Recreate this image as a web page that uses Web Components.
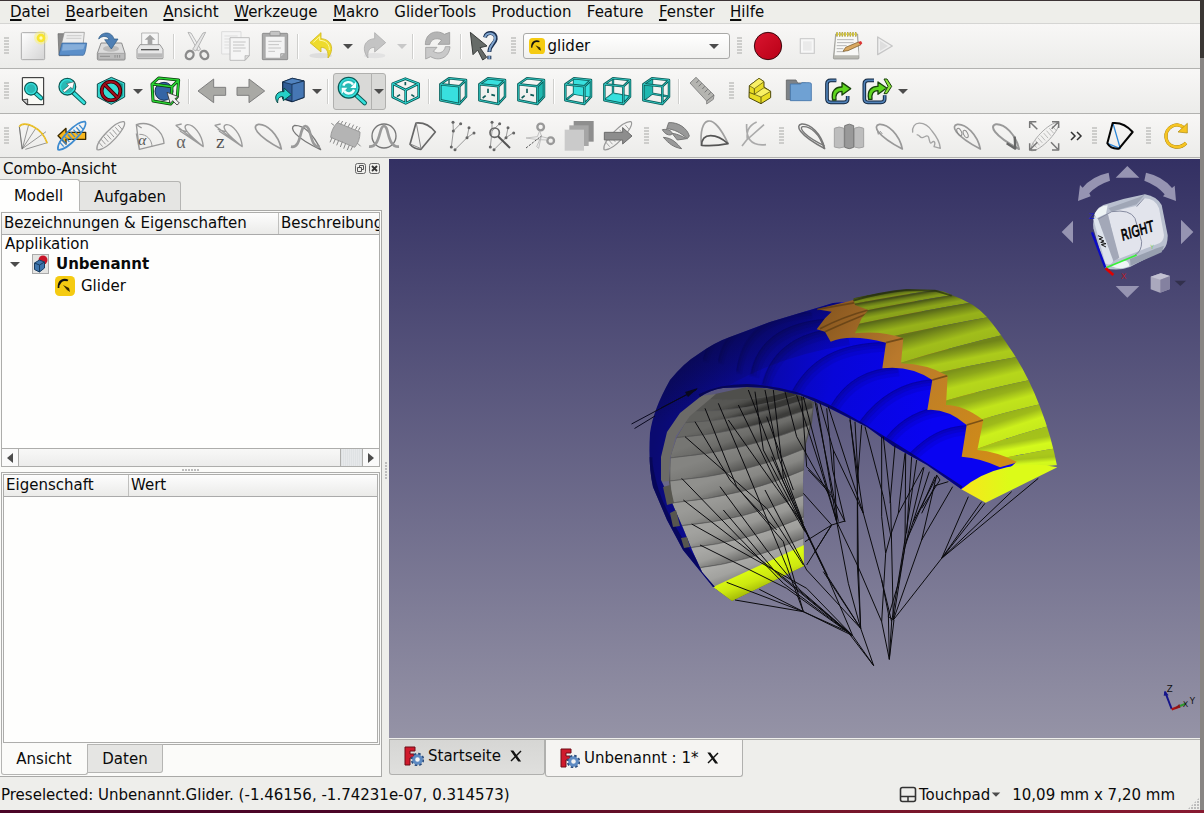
<!DOCTYPE html>
<html lang="de">
<head>
<meta charset="utf-8">
<title>FreeCAD</title>
<style>
html,body{margin:0;height:100%;overflow:hidden;background:#eeeeeb}
body{font:15px/20px "DejaVu Sans",sans-serif;color:#0a0a0a}
</style>
</head>
<body>
<app-window></app-window>
<script>
const define=(name,html,setup)=>{
  const t=document.createElement('template');t.innerHTML=html;
  customElements.define(name,class extends HTMLElement{
    constructor(){super();this.attachShadow({mode:'open'}).append(t.content.cloneNode(true));}
    connectedCallback(){if(setup&&!this.ready){this.ready=true;setup(this,this.shadowRoot);}}
  });
};

/* ---------- icons: [viewBox x, viewBox y, markup], each 90 units wide ---------- */
const R1=93,R2=228,R3=363;
const S=(d,c='#9a9a9a',w=4,x='')=>`<path d="${d}" fill="none" stroke="${c}" stroke-width="${w}" stroke-linejoin="round" ${x}/>`;
const F=(d,f,c='none',w=3)=>`<path d="${d}" fill="${f}" stroke="${c}" stroke-width="${w}" stroke-linejoin="round"/>`;
const TEAL='#34e0dc',DK='#0c5b57';
const P={A:'7 25',B:'64 31',C:'64 84',D:'7 73',E:'33 7',G:'84 62',F:'84 12',H:'33 53'};
const face=s=>'M'+[...s].map(k=>P[k]).join('L')+'Z';
const cube=f=>{
  const back='M33 7L33 53L84 62M33 53L7 73';
  const all='M7 25L64 31L64 84L7 73ZM7 25L33 7L84 12L64 31M84 12L84 62L64 84';
  const dashes='M33 38v13M26 59l-9 7M43 56l11 3';
  return [0,0,(f==='EFGH'||f==='DCGH'||f==='ADHE'?S(back,DK,7)+S(back,TEAL,2):'')+
   F(face(f),f==='ADHE'||f==='BCGF'?'#20b8b0':'#38e0de')+
   (f==='ABFE'||f==='BCGF'?S(dashes,DK,5):'')+(f==='ABCD'?S('M33 7V24',DK,4):'')+S(all,DK,7.5)+S(all,'#2fc9c4',2.8)];
};
const leaf=(x,y,c='#9a9a9a',w=4)=>S(`M${x+84} ${y+84}C${x+75} ${y+40} ${x+40} ${y+8} ${x+15} ${y+10}C${x-5} ${y+14} ${x+5} ${y+42} ${x+84} ${y+84}Z`,c,w);
const glass=(x,y,r,e)=>`<path d="M${x+r*.7} ${y+r*.7}L${x+e} ${y+e-2}" stroke="${DK}" stroke-width="14" stroke-linecap="round"/><path d="M${x+r*.8} ${y+r*.8}L${x+e} ${y+e-2}" stroke="${TEAL}" stroke-width="8" stroke-linecap="round"/><circle cx="${x}" cy="${y}" r="${r}" fill="#28b9b5" stroke="${DK}" stroke-width="4"/><circle cx="${x}" cy="${y}" r="${r-4}" fill="none" stroke="${TEAL}" stroke-width="4"/>`;
const rung=(x,y,c,w)=>{let s=S(`M${x+3} ${y+86}C${x-3} ${y+62} ${x+60} ${y-2} ${x+84} ${y+2}C${x+98} ${y+16} ${x+30} ${y+92} ${x+3} ${y+86}Z`,c,w);
  for(let i=0;i<8;i++)s+=S(`M${x+7+i*8.5} ${y+62-i*7.2}l13 ${15}`,c,w*.75);return s;};
const arrowOut='M98 300C92 272 108 260 126 261V248L152 266L126 285V274C110 274 106 286 108 300Z';
const I={
new:[54,R1,`<rect x="64" y="98" width="70" height="81" rx="3" fill="url(#lg)" stroke="#aaa" stroke-width="3"/><circle cx="123" cy="113" r="21" fill="#fff36b" opacity=".45"/><circle cx="123" cy="114" r="13" fill="#f8e52c"/><circle cx="123" cy="114" r="5" fill="#fffbc0"/>`],
open:[171,R1,F('M174 101h28l6 8v58h-31Z','#8b8b8b','#666',2)+F('M193 97h60l-4 40h-66Z','#ededed','#888',2)+S('M200 107h45M199 115h45','#bbb',2)+F('M186 129h74q-4 34-10 37h-71q-3 0-1-5Z','#5b8fc9','#305f96',2)+F('M189 133h66l-5 15q-30 3-64 4Z','#86aeda')],
save:[288,R1,F('M303 129h62l10 31v17q0 3-3 3h-76q-4 0-4-3v-17Z','#dcdcdc','#7b7b7b',2.5)+F('M294 160h80v15q0 3-3 3h-74q-3 0-3-3Z','#bcbcbc','#888',1.5)+S('M300 169h30M345 165v8M352 165v8M359 165v8','#777',2)+`<ellipse cx="333" cy="146" rx="24" ry="9" fill="#bbb"/>`+F('M296 117C300 96 334 90 342 117H354L334 147L314 119H327C323 108 309 105 296 117Z','#4e7fb4','#295782',2)],
print:[405,R1,F('M425 99h50v42h-50Z','#f6f6f6','#aaa',2.5)+F('M443 133v-14h-9l16-15l16 15h-9v14Z','#a4a4a4')+F('M420 134h60l9 14v26q0 2-3 2h-72q-3 0-3-2v-26Z','#e7e7e7','#8c8c8c',2.5)+S('M423 149h54','#555',4)+F('M413 160h74v13h-74Z','#b9b9b9')],
cut:[546,R1,F('M564 97L573 99L602 148L594 153Z','#f0f0f0','#aaa',2.5)+F('M617 97L609 99L578 148L588 153Z','#e6e6e6','#aaa',2.5)+`<ellipse cx="569" cy="165" rx="11" ry="13" fill="none" stroke="#8b8b8b" stroke-width="7" transform="rotate(35 569 165)"/><ellipse cx="613" cy="165" rx="11" ry="13" fill="none" stroke="#8b8b8b" stroke-width="7" transform="rotate(-35 613 165)"/>`],
copy:[663,R1,F('M665 95h58v67h-58Z','#f4f4f4','#dcdcdc')+S('M673 108h40M673 117h40M673 126h14M673 135h14M673 144h14','#ddd',3)+F('M690 113h58v54l-13 14h-45Z','#f5f5f5','#bdbdbd')+F('M748 167h-13v14Z','#ddd','#aaa',2)+S('M699 126h38M699 135h34M699 144h38M699 153h24','#c4c4c4',3)],
paste:[780,R1,F('M789 100h72q2 0 2 3v74q0 2-2 2h-72q-2 0-2-2v-74q0-3 2-3Z','#aaa','#8f8f8f')+F('M797 110h57v51l-12 12h-45Z','#f3f3f3')+F('M854 161h-12v12Z','#ccc','#888',2)+F('M810 98q0-4 4-4h22q4 0 4 4v9h-30Z','#c4c4c4','#888',2)+S('M805 124h40M805 134h32M805 144h38M805 154h20','#c4c4c4',3)],
undo:[918,R1,`<ellipse cx="962" cy="167" rx="34" ry="8" fill="#ddd"/>`+F('M930 128L963 98V116C996 118 1004 148 984 174C986 152 978 142 963 142V156Z','#eedb2d','#d1b71b',2.5)+S('M940 127l19-17v11c20 0 30 14 29 29','#fff9a0',3)],
redo:[1086,R1,`<ellipse cx="1130" cy="167" rx="32" ry="8" fill="#e2e2e2"/>`+F('M1163 128L1130 98V116C1098 118 1090 148 1110 174C1107 152 1115 142 1130 142V156Z','#c4c4c4','#adadad',2.5)],
refresh:[69,R1,F('M79 134C79 96 115 88 136 103L152 97V133H117L128 120C112 112 96 117 92 134Z','#b4b4b4','#9a9a9a',2.5)+F('M153 140C150 176 117 184 95 170L80 177V142H114L103 154C118 164 136 158 139 140Z','#c9c9c9','#a0a0a0',2.5)],
whats:[210,R1,F('M214 97L264 138L243 143L263 172L251 180L236 150L222 164Z','#666b68','#3a3d3b')+`<path d="M258 112C262 92 293 96 290 117C288 132 272 133 271 156M271 167v11" fill="none" stroke="#1c3050" stroke-width="12"/><path d="M258 112C262 94 291 98 288 117C286 130 272 133 271 155M271 168v9" fill="none" stroke="#7fa5cf" stroke-width="6"/>`],
record:[1059,R1,`<circle cx="1104" cy="138" r="41" fill="url(#rg)" stroke="#3a0a10" stroke-width="3"/>`],
stop:[-24,R1,F('M1 116h42v44h-42Z','#f7f7f7','#cfcfcf',4)+F('M9 124h26v28h-26Z','#eaeaea')],
macro:[90,R1,F('M104 102h66l4 72q0 3-3 3h-71q-3 0-3-3Z','#b9b9b2','#8d8d88',2)+F('M106 104h61l6 62h-72Z','#f8f8f6')+S('M108 119h50M108 128h50M107 137h30M107 146h20M107 155h24','#b6b6b6',3)+S('M106 103h62','#8a7a20',13,'stroke-dasharray="4 4"')+S('M106 103h62','#d7c93c',9,'stroke-dasharray="5 3"')+F('M126 154L134 142L172 126L180 134L141 152Z','#d9a860','#6e5021',2)+F('M172 126l8-3l4 7l-5 5Z','#d33')],
play:[210,R1,F('M233 111L277 138L233 164Z','#efefef','#c6c6c6',4)+F('M240 122L264 138L240 153Z','#dedede')],

fit:[54,R2,F('M67 233h64v81h-50l-14-14Z','#fafaf6','#222',3)+F('M67 300l16-3v17Z','#ccc','#222',2.5)+glass(93,266,19,30)],
fitsel:[171,R2,glass(202,260,25,50)+F('M188 272l18-15l-6-6l23-6l-5 22l-6-5l-18 15Z','#fff','#333',1.5)],
style:[288,R2,F('M334 232L374 249V291L334 313L292 291V252Z','#35d6cf','#14494a',3)+F('M341 240L368 252V288L341 305Z','#159089')+`<circle cx="333" cy="273" r="28" fill="#38dcd4" stroke="#3a0006" stroke-width="11"/><circle cx="333" cy="273" r="28" fill="none" stroke="#a90d1d" stroke-width="6"/>`+S('M314 254L352 292','#3a0006',11)+S('M314 254L352 292','#a90d1d',6)],
bbox:[450,R2,`<circle cx="492" cy="274" r="27" fill="#3565a5" stroke="#132d55" stroke-width="3"/>`+S('M456 252L476 234L536 240L516 260ZM456 252L459 303L512 312L516 260M536 240L532 290L512 312','#08380a',9)+S('M456 252L476 234L536 240L516 260ZM456 252L459 303L512 312L516 260M536 240L532 290L512 312','#29d332',5)+F('M501 277L535 290L525 296L538 309L531 315L518 302L511 311Z','#eee','#333',2.5)],
left:[591,R2,F('M594 273L641 237V262H677V286H641V308Z','#a9a9a5','#7f7f7f')],
right:[708,R2,F('M794 273L747 237V262H711V286H747V308Z','#a9a9a5','#7f7f7f')],
goto:[825,R2,F('M848 246L877 235L912 243V292L876 305L848 296Z','#2f5c96','#0f2541',3.5)+F('M848 246L877 235L912 243L876 253Z','#5183bf','#0f2541',2)+F('M876 253L912 243V292L876 305Z','#4677b4','#0f2541',2)+F('M833 309C818 288 834 272 852 275V264L874 284L850 302V291C840 287 832 295 833 309Z','#25cfc8','#0a4845',3)],
sync:[1008,R2,glass(1046,263,31,48)+S('M1030 257C1034 245 1052 242 1059 254M1062 269C1058 283 1040 284 1033 273','#f4ffff',7)+F('M1068 245v19h-17ZM1025 282v-19h17Z','#f4ffff')],
iso:[-27,R2,S('M16 236L56 251V291L17 310L-22 291V251ZM17 270L56 251M17 270V310M17 270L-22 251',DK,8)+S('M16 236L56 251V291L17 310L-22 291V251ZM17 270L56 251M17 270V310M17 270L-22 251',TEAL,3)+S('M16 246v10M0 284l-9 6M34 284l9 6',DK,5)],
cF:cube('ABCD'),cT:cube('ABFE'),cR:cube('BCGF'),cB:cube('EFGH'),cD:cube('DCGH'),cL:cube('ADHE'),
ruler:[862,R2,F('M886 232L868 249L918 303V312L938 298L940 285Z','#b4b4b0','#8a8a8a')+S('M918 303L940 285M894 241l-7 8M903 250l-9 9M912 259l-7 8M921 268l-9 9M930 277l-7 8','#777',3)],
part:[1035,R2,F('M1048 257L1077 235L1092 245V261L1112 274V293L1083 311L1047 293Z','#e9dc25','#4c470a',3)+F('M1048 257L1077 235L1092 245L1063 266Z','#f8f065','#4c470a',2)+F('M1063 283L1092 263L1112 274L1083 291Z','#f8f065','#4c470a',2)+S('M1063 266V283L1047 277M1083 291V311','#4c470a',2.5)],
group:[-48,R2,F('M-41 240h29l5 9h24v50h-58Z','#7d8287','#666',2.5)+F('M-29 252h30l5-4h22q6 0 6 4v50h-63Z','#6fa1d3','#4274aa',2.5)],
link:[69,R2,S('M109 241H92Q81 241 81 252V297Q81 307 92 307H132Q143 307 143 297V288','#12263e',11)+S('M109 241H92Q81 241 81 252V297Q81 307 92 307H132Q143 307 143 297V288','#5182b8',5)+F(arrowOut,'#5ed61e','#17420a',4)],
linkg:[186,R2,S('M222 241H204Q193 241 193 252V297Q193 307 204 307H243Q254 307 254 297V286','#12263e',11)+S('M222 241H204Q193 241 193 252V297Q193 307 204 307H243Q254 307 254 297V286','#5182b8',5)+`<g transform="translate(108 -2)">${F(arrowOut,'#5ed61e','#17420a',4)}</g>`+F('M252 237L261 237L275 259L261 281L252 281L264 259Z','#8ce33a','#17420a',3)],

g1:[54,R3,S('M58 380L67 446L86 374M67 446L138 395M67 446L108 384M76 448L142 428M58 380L66 448','#666',2)+S('M58 380C70 360 125 380 142 430','#e5b81c',5)+S('M58 380C70 360 125 380 142 430','#f7d95a',2,'stroke-dasharray="4 5"')],
g2:[171,R3,F('M174 407L198 385V397H257V418H198V432Z','#f7b61d','#3b2a00',4)+rung(171,R3,'#3d8bd0',5)],
g3:[288,R3,rung(288,R3,'#9b9b9b',4)],
g4:[405,R3,S('M409 374C450 360 490 392 492 430L418 448ZM409 374L425 384M418 448L409 400','#999',4)+S('M418 403C440 402 456 420 456 440','#999',3)+`<text x="415" y="436" font-family="Liberation Serif" font-style="italic" font-size="46" fill="#555">α</text>`],
g5:[522,R3,S('M610 440C606 400 580 373 562 374C540 380 575 412 610 440L540 393M527 376L610 440M527 376L545 372M536 388L560 395','#9b9b9b',4)+`<text x="529" y="444" font-family="Liberation Serif" font-size="54" fill="#666">α</text>`],
g6:[639,R3,S('M727 440C723 400 697 373 679 374C657 380 692 412 727 440L657 393M644 376L727 440M644 376L662 372M653 388L677 395','#9b9b9b',4)+`<text x="648" y="444" font-family="DejaVu Serif" font-size="48" fill="#555">z</text>`],
g7:[756,R3,leaf(760,R3,'#999',5)],
g8:[873,R3,S('M962 449C948 420 920 376 884 376C866 384 884 412 962 449Z','#777',4)+S('M873 440C905 446 898 380 916 378C936 380 928 444 960 440','#999',8)],
g9:[990,R3,F('M1012 368L1080 396Q1080 424 1064 442L992 412Q994 386 1012 368Z','#b4b4b4','#999')+S('M1012 370l6-8M1022 373l6-10M1033 377l6-11M1044 381l6-11M1055 385l6-11M1066 389l6-11M1075 392l5-10M996 413l-6 14M1006 417l-6 14M1016 421l-6 15M1027 425l-6 16M1037 430l-6 16M1048 435l-6 15M1058 439l-6 12M1002 376l-8-6M1073 430l9 9','#888',3)],
g10:[1107,R3,`<circle cx="1152" cy="408" r="36" fill="none" stroke="#777" stroke-width="4"/>`+S('M1107 440C1143 442 1136 378 1152 378C1168 378 1160 442 1197 440','#9b9b9b',8)],
g11:[24,R3,S('M48 369Q82 366 106 396L63 448Q42 448 30 433Z','#666',5)+S('M49 370L63 446L31 432','#888',3)],
g12:[141,R3,S('M159 367L160 393L154 441M160 393L182 371M165 449L201 413L222 399M201 413L207 383','#999',3)+['159,367','182,371','160,393','154,441','165,449','201,413','222,399','207,383'].map(p=>`<circle cx="${p.split(',')[0]}" cy="${p.split(',')[1]}" r="4.500" fill="#666"/>`).join('')],
g13:[258,R3,S('M276 367L276 393L271 441M276 393L299 371M282 449L318 413L339 399M318 413L324 383','#999',3)+['276,367','299,371','271,441','282,449','318,413','341,399','324,383'].map(p=>`<circle cx="${p.split(',')[0]}" cy="${p.split(',')[1]}" r="4.500" fill="#666"/>`).join('')+`<circle cx="284" cy="398" r="14" fill="none" stroke="#666" stroke-width="5"/>`+S('M294 409L330 444','#555',6)],
g14:[375,R3,`<circle cx="422" cy="381" r="10" fill="none" stroke="#999" stroke-width="7"/><circle cx="452" cy="422" r="10" fill="none" stroke="#999" stroke-width="7"/>`+F('M419 392L425 410L442 414L440 420L414 419L378 414L412 410Z','#eee','#aaa',2)+F('M424 408L416 445L410 440Z','#eee','#aaa',2)+S('M378 444L424 408','#555',3,'stroke-dasharray="7 4"')],
g15:[492,R3,F('M521 363h60v62h-60Z','#8e8e8e')+F('M508 376h58v62h-58Z','#a6a6a6')+F('M494 389h58v63h-58Z','#cacaca')],
g16:[609,R3,rung(609,R3,'#999',3.5)+F('M613 397H668V383L696 408L668 432V420H613Z','#8d8d8d','#6c6c6c')],
g17:[780,R3,F('M806 368C835 366 862 385 868 408L862 416C840 396 822 388 800 386Z','#999','#777')+F('M787 389C805 385 822 396 814 404C802 408 790 396 787 389ZM816 400C835 402 852 412 860 416L832 420ZM790 412C818 414 830 430 845 446C820 442 806 430 790 412Z','#999','#777')],
g18:[897,R3,S('M904 438C896 350 938 330 984 430','#a0a0a0',5)+S('M905 436C905 396 950 400 984 431C960 436 930 438 905 436Z','#555',5)],
g19:[1014,R3,S('M1040 372C1038 410 1048 440 1098 434M1092 374L1040 420L1026 438M1070 366C1040 380 1040 400 1042 418','#aaa',5)],
g20:[-15,R3,leaf(-10,362,'#777',4.5)+S('M72 446C60 400 30 378 8 380C-5 384 15 410 74 438','#777',4)],
g21:[102,R3,F('M103 385q14-8 29 0v56q-14 6-29 0ZM163 385q14-8 28 0v56q-14 6-28 0Z','#bdbdbd','#a3a3a3')+F('M134 377q14-9 27 0v65q-13 8-27 0Z','#999','#777')],
g22:[219,R3,leaf(223,R3,'#999',5)+S('M229 383l6 20l6-9l6 8','#999',3)],
g23:[336,R3,S('M338 398C334 360 375 362 396 393C410 410 420 432 421 445L402 440C408 426 402 420 395 428C390 434 388 420 386 412C382 402 374 412 367 413C358 414 362 405 350 404','#a4a4a4',4)],
g24:[453,R3,leaf(457,R3,'#999',5)+`<ellipse cx="478" cy="396" rx="6" ry="12" transform="rotate(-25 478 396)" fill="none" stroke="#888" stroke-width="3"/><ellipse cx="497" cy="402" rx="6" ry="12" transform="rotate(-25 497 402)" fill="none" stroke="#888" stroke-width="3"/>`],
g25:[570,R3,leaf(573,R3,'#999',6)+S('M644 410L646 446L620 430','#666',7)],
g26:[687,R3,rung(690,366,'#aaa',3)+S('M689 384V365H709M692 368L712 388M756 365H776V384M773 368L755 386M689 430V450H709M692 447L712 427M756 450H776V430M773 447L753 427','#777',4.5)],
g27:[915,R3,S('M939 370L961 446M924 431L961 446','#2b86d8',4)+S('M938 369Q972 366 998 396L957 446Q932 448 922 430Z','#050505',6)],
g28:[1083,R3,S('M1153 384C1128 362 1096 384 1098 412C1101 442 1138 450 1158 429','#a07c0a',10)+S('M1153 384C1128 362 1096 384 1098 412C1101 442 1138 450 1158 429','#f6c423',8)+F('M1162 370V399L1134 396Z','#f6c423','#a98509',2)]
};
const G='<defs><linearGradient id="lg" x1="0" y1="0" x2="1" y2="1"><stop stop-color="#fff"/><stop offset="1" stop-color="#d4d4d4"/></linearGradient><linearGradient id="rg" x1="0" y1="0" x2="1" y2="1"><stop stop-color="#da1530"/><stop offset="1" stop-color="#b80016"/></linearGradient></defs>';
define('tool-icon','<style>:host{display:block;width:30px;height:30px;flex:none}svg{display:block;overflow:visible}</style><div></div>',(h,r)=>{
  const [x,y,m]=I[h.getAttribute('name')];
  r.querySelector('div').innerHTML=`<svg width="30" height="30" viewBox="${x} ${y} 90 90">${G}${m}</svg>`;
});
define('tool-button','<style>:host{display:flex;flex:none;width:39px;height:36px;align-items:center;justify-content:center}</style>',(h,r)=>{
  const n=document.createElement('tool-icon');n.setAttribute('name',h.getAttribute('icon'));r.append(n);
});

define('drop-arrow','<style>:host{display:flex;flex:none;width:15px;align-items:center;justify-content:center}i{border:5px solid transparent;border-top-color:#4c4c4c;border-bottom:0}:host([off]) i{border-top-color:#c8c8c8}</style><i></i>');
define('tool-sep','<style>:host{display:flex;flex:none;width:8px;justify-content:center;align-items:center}i{width:1px;height:25px;background:#cfcfcd;border-right:1px solid #fff}</style><i></i>');
define('tool-handle','<style>:host{display:flex;flex:none;width:18px;justify-content:center;align-items:center}i{width:5px;height:18px;background:radial-gradient(circle at 1px 1px,#ccccca 0 .7px,transparent 1px) 0 0/2px 3px}</style><i></i>');
define('tool-bar','<style>:host{display:flex;box-sizing:border-box;height:45px;flex:none;align-items:center;background:linear-gradient(#f8f7f6,#ececea);border-bottom:1px solid #b2b2b0;overflow:hidden}</style><slot></slot>');
define('split-button','<style>:host{display:flex;flex:none;width:53.5px;height:37px}div{box-sizing:border-box;border:1px solid #b0b0ae;background:#d9d9d7;display:flex;align-items:center;justify-content:center;border-radius:3px 0 0 3px}.a{width:39px}.b{width:15px;margin-left:-.5px;border-radius:0 3px 3px 0}tool-icon{margin-left:-2px}</style><div class="a"><tool-icon name="sync"></tool-icon></div><div class="b"><drop-arrow></drop-arrow></div>');
define('glider-icon','<style>:host{display:block;width:20px;height:20px;flex:none}svg{display:block;width:100%;height:100%}</style><svg viewBox="0 0 20 20"><rect width="20" height="20" rx="4.500" fill="#f5cb12"/><path d="M3.500 12C3 4 9 2.500 13 4.500M4 9C6 4 9 3.500 12 4.500" fill="none" stroke="#111" stroke-width="1.700"/><path d="M8 9l6 3l1 4l-3-2Z" fill="#3a2c00"/></svg>');
define('combo-box','<style>:host{display:flex;flex:none;box-sizing:border-box;width:207px;height:26px;border:1px solid #a9a9a7;border-radius:3px;background:linear-gradient(#fff,#f1f1ef);align-items:center;padding:0 7px 0 5px}glider-icon{width:16px;height:16px}span{flex:1;margin-left:3px}</style><glider-icon></glider-icon><span><slot></slot></span><drop-arrow></drop-arrow>');
define('menu-bar','<style>:host{display:flex;flex:none;height:23px;padding-left:10px;background:#eeeeea;border-bottom:1px solid #d5d5d3;box-sizing:border-box;gap:15.45px;line-height:22px;white-space:pre}u{text-decoration-thickness:2px;text-underline-offset:2px;text-decoration-skip-ink:none}</style><span><u>D</u>atei</span><span><u>B</u>earbeiten</span><span><u>A</u>nsicht</span><span><u>W</u>erkzeuge</span><span><u>M</u>akro</span><span>GliderTools</span><span>Production</span><span>Feature</span><span><u>F</u>enster</span><span><u>H</u>ilfe</span>');

define('list-header','<style>:host{display:flex;box-sizing:border-box;height:22px;background:linear-gradient(#fdfdfd,#ebebe9);border-bottom:1px solid #aaa;line-height:20px;overflow:hidden;white-space:nowrap}::slotted(span){box-sizing:border-box;flex:none;padding-left:2px;border-right:1px solid #c0c0be}::slotted(span:last-child){border:0}</style><slot></slot>');
define('model-tree',`<style>
:host{display:flex;flex-direction:column;box-sizing:border-box;width:379px;height:256px;margin:1px 0 0 1px;border:1px solid #adadab;background:#fefefd}
.t{flex:1}.r{display:flex;align-items:center;height:22px}.r0{height:18px;line-height:18px;padding-left:3px}
.s{display:flex;height:17px;border-top:1px solid #adadab;background:linear-gradient(#f8f8f7,#ececeb)}
.s b{width:16px;display:flex;align-items:center;justify-content:center;background:#fafafa}.s b:first-child{border-right:1px solid #adadab}.s b:last-child{border-left:1px solid #adadab}
.g{flex:1}.h{width:21px;border-left:1px solid #adadab;background:repeating-linear-gradient(90deg,#dfe2e4 0 1px,#e6e8ea 1px 2px)}
</style><list-header><span style="width:277px">Bezeichnungen &amp; Eigenschaften</span><span>Beschreibung</span></list-header>
<div class="t"><div class="r0">Applikation</div><div class="r"><drop-arrow style="margin:0 10px 0 5px"></drop-arrow>
<svg width="17" height="20" viewBox="0 0 17 20"><rect x=".5" y=".5" width="16" height="19" fill="#e4e4e2" stroke="#aaa"/><circle cx="11" cy="6" r="4.500" fill="#c81428"/><path d="M2.500 9l5-3l5 2v6l-5 4l-5-2.500Z" fill="#3d75ad" stroke="#193c60"/><path d="M2.500 9l5 2l5-3M7.500 11v7" fill="none" stroke="#193c60"/></svg>
<b style="margin-left:7px">Unbenannt</b></div><div class="r"><glider-icon style="margin-left:53px"></glider-icon><span style="margin-left:6px">Glider</span></div></div>
<div class="s"><b><svg width="6" height="10"><path d="M6 0v10L0 5Z" fill="#4c4c4c"/></svg></b><div class="g"></div><div class="h"></div><b><svg width="6" height="10"><path d="M0 0v10L6 5Z" fill="#4c4c4c"/></svg></b></div>`);
define('property-list',`<style>:host{display:block;box-sizing:border-box;width:379px;height:273px;margin-left:1px;border:1px solid #adadab;background:#fafaf9;padding:1px}.i{box-sizing:border-box;height:269px;border:1px solid #adadab;background:#fefefd}</style><div class="i"><list-header><span style="width:125px">Eigenschaft</span><span>Wert</span></list-header></div>`);
define('tab-item',`<style>:host{display:flex;box-sizing:border-box;flex:none;align-items:center;justify-content:center;border:1px solid #b5b5b3;background:#e5e5e3;white-space:pre}</style><slot></slot>`);
define('combo-view',`<style>
:host{display:flex;flex-direction:column;width:389px;height:620px;flex:none;position:relative}
.h{box-sizing:border-box;display:flex;height:22px;align-items:center;padding:0 9px 0 3px;width:389px}.h span{flex:1}.h svg{position:relative;top:-1px}
.tabs{display:flex;height:30px;align-items:flex-end;position:relative;z-index:1}
.f{box-sizing:border-box;width:382px;height:567px;border:1px solid #a9a9a7;border-left:0;background:#fbfbf9;display:flex;flex-direction:column}
.d{height:5px;display:flex;align-items:center;justify-content:center}.d i{width:17px;height:2px;background:radial-gradient(circle at 1px 1px,#bbb 0 .7px,transparent 1px) 0 0/3px 3px}
.bt{display:flex;margin-left:1px;position:relative;top:-1px;align-items:flex-start}
.v{position:absolute;left:385px;top:304px;width:2px;height:17px;background:radial-gradient(circle at 1px 1px,#bbb 0 .7px,transparent 1px) 0 0/3px 3px}
</style>
<div class="h"><span>Combo-Ansicht</span><svg width="11" height="11"><rect x=".5" y=".5" width="10" height="10" rx="2" fill="none" stroke="#666"/><path d="M4.500 4.500v-2h4v4h-2M2.500 4.500h4v4h-4Z" fill="none" stroke="#555"/></svg><svg width="11" height="11" style="margin-left:3px"><rect x=".5" y=".5" width="10" height="10" rx="2" fill="none" stroke="#666"/><path d="M3 3l5 5M8 3l-5 5" stroke="#333" stroke-width="1.800"/></svg></div>
<div class="tabs"><tab-item style="width:80px;height:32px;border-left:0;border-bottom:0;border-radius:0 3px 0 0;background:#fefefd;margin-bottom:-1px;padding-right:2px">Modell</tab-item><tab-item style="width:101px;height:29px;border-left:0;border-bottom:0;border-radius:0 3px 0 0;padding-top:1px">Aufgaben</tab-item></div>
<div class="f"><model-tree></model-tree><div class="d"><i></i></div><property-list></property-list>
<div class="bt"><tab-item style="width:87px;height:31px;border-top:0;border-radius:0 0 3px 3px;background:#fbfbf9;padding-right:1px">Ansicht</tab-item><tab-item style="width:75px;height:29px;border-left:0;border-radius:0 0 3px 0">Daten</tab-item></div></div><i class="v"></i>`);

/* ---------- 3D scene ---------- */
const grays=[[700,398,790,391],[692,411,802,394],[682,423,811,398],[673,438,813,408],[670,458,810,425],[670,481,804,449],[672,503,804,470],[679,526,804,495],[688,548,804,517],[698,568,804,538],[712,590,804,560]];
let gs='',gd='';
grays.slice(0,-1).forEach((a,i)=>{const b=grays[i+1],L=[86,95,104,118,132,144,154,162,168,172][i],D=[50,55,60,68,78,88,96,102,108,122][i];
  const mx=740,my=(a[1]+a[3])/2+5,h=((b[1]-a[1])+(b[3]-a[3]))/2;
  gd+=`<linearGradient id="g${i}" gradientUnits="userSpaceOnUse" x1="${mx}" y1="${my}" x2="${mx+h*.35}" y2="${my+h*1.0}"><stop stop-color="rgb(${L},${L},${L-3})"/><stop offset=".45" stop-color="rgb(${L-10},${L-10},${L-13})"/><stop offset="1" stop-color="rgb(${D},${D},${D-2})"/></linearGradient>`;
  gs+=`<path d="M${a[0]} ${a[1]}Q745 ${my+5} ${a[2]} ${a[3]}L${b[2]} ${b[3]}Q745 ${(b[1]+b[3])/2+10} ${b[0]} ${b[1]}Z" fill="url(#g${i})" stroke="#555" stroke-width=".6"/>`;});
const yl=[[90,66,380,20],[140,76,405,34],[165,98,460,48],[160,135,505,72],[230,180,556,116],[300,249,602,167],[380,286,642,235],[436,362,682,303],[500,432,713,375],[528,508,736,440],[570,544,757,510],[600,575,790,560]];
let ys='',yd='';
yl.slice(0,-1).forEach((a,i)=>{const b=yl[i+1],k=Math.min(1,.56+i*.05),c=f=>`rgb(${Math.round(212*f)},${Math.round(250*f)},${Math.round(22+6*f)})`;
  const x=(a[0]+a[2])/2,y=(a[1]+a[3])/2,x2=(b[0]+b[2])/2,y2=(b[1]+b[3])/2,dx=b[2]-b[0],dy=b[3]-b[1],l=Math.hypot(dx,dy),h=((x-x2)*dy-(y-y2)*dx)/l,nx=-dy/l,ny=dx/l;
  yd+=`<linearGradient id="y${i}" gradientUnits="userSpaceOnUse" x1="${x}" y1="${y}" x2="${x+nx*Math.abs(h)}" y2="${y+ny*Math.abs(h)}"><stop stop-color="${c(k*(.5+i*.03))}"/><stop offset=".25" stop-color="${c(k*.78)}"/><stop offset=".6" stop-color="${c(k)}"/><stop offset="1" stop-color="${c(k*.97)}"/></linearGradient>`;
  ys+=`<path d="M${a[0]} ${a[1]}Q${x} ${y-6} ${a[2]+40} ${a[3]-10}L${b[2]+40} ${b[3]-10}Q${x2} ${y2-6} ${b[0]} ${b[1]}L${b[0]-120} ${b[1]+30}L${a[0]-120} ${a[1]+30}Z" fill="url(#y${i})"/>`;});
const ribs=['M-90 52C-260 100 -330 150 -372 240','M-30 35C-260 90 -320 150 -345 230','M0 60C-200 80 -265 130 -290 235','M10 80C-150 90 -225 140 -245 240','M30 95C-110 100 -175 160 -190 270','M75 118C-60 130 -130 190 -145 280','M80 150C-20 165 -90 220 -110 310','M258 188C110 190 30 240 -20 330','M290 262C200 268 140 300 95 375','M397 300C310 305 235 350 180 425','M440 378C360 385 300 420 262 470','M500 437C430 442 385 465 330 520'];
const ribS=ribs.map((d,i)=>[[30,.07,12],[18,.09,7],[9,.1,3],[3,.13,0]].map(([w,o,s])=>`<path d="${d}" transform="translate(${s*.6} ${s})" fill="none" stroke="#05053a" stroke-opacity="${o*1.15}" stroke-width="${w*(i<5?.6:1)}"/>`).join('')).join('');
const L=[
'761 647L698 557L550 485L345 450','761 647L683 545L550 485','550 485L320 397','550 485L418 418','550 485L500 350','550 485L490 275',
'698 557L500 415L240 285','698 557L560 415L215 222','698 557L500 390L190 150','683 545L490 400L185 85','698 557L620 375L545 220',
'683 545L470 370L310 180','698 557L540 420L440 300L300 110','722 535L620 375L570 270L455 20','722 535L560 360L435 120','722 535L715 345L712 100','761 647L722 535L610 365',
'195 -40L440 175L550 345','225 -85L330 90L470 240','255 -125L350 110L490 275','295 -140L380 60L500 350','325 -90L470 115L545 215','355 -135L470 100L555 245',
'385 -180L490 95L570 270','405 -175L430 0L560 250','435 -180L475 20L550 220','460 -180L490 80L545 210','495 -175L530 -40L630 140','440 -100L520 120',
'530 -165L600 50L650 215','550 -160L610 70L650 215','545 -160L560 50L635 130','585 -145L640 130L655 215','590 -140L650 215L712 345','620 -125L638 60L675 215','625 -130L690 70L730 190','600 -140L640 0L650 215',
'650 215L685 400L722 535','635 225L555 275','635 225L560 345','635 225L675 213','550 130L635 225','565 60L630 130L675 215','545 215L622 375','635 225L585 305',
'690 -95L712 100L712 345','705 -85L715 100','725 -75L712 100','640 0L730 190L785 390L815 515','690 -90L715 90L730 190','735 -70L790 140L812 255','785 -40L785 200L797 310','790 -40L812 160L820 510',
'712 345L785 515','722 535L712 345','797 310L785 515','797 310L812 255L835 190L910 52','785 515L808 628L815 515','785 390L805 490L808 628','825 -13L810 160','855 10L835 190','857 10L855 290','875 20L860 250','890 30L858 250L815 515',
'912 52L855 290L820 510','950 75L905 270L820 510','928 65L855 290','950 80L880 215','985 95L945 107L905 190','998 110L905 270','945 80L860 270','808 628L822 510L805 500L835 400L855 290',
'820 510L965 325L1255 85','965 325L1175 125','965 325L1095 160','965 325L1085 155','965 325L1045 140','950 75L960 90L905 175'];
define('scene-view',`<style>:host{display:block;width:811px;height:579px;flex:none}svg{display:block}</style>
<svg width="811" height="579" viewBox="389 159 811 579"><defs>
<linearGradient id="bg" x1="0" y1="0" x2="0" y2="1"><stop stop-color="#333063"/><stop offset="1" stop-color="#9593a6"/></linearGradient>
<linearGradient id="bl" gradientUnits="userSpaceOnUse" x1="670" y1="370" x2="930" y2="430"><stop stop-color="#0a0a70"/><stop offset=".3" stop-color="#0a09a0"/><stop offset=".6" stop-color="#0806d8"/><stop offset="1" stop-color="#0903f2"/></linearGradient>
<linearGradient id="sh" gradientUnits="userSpaceOnUse" x1="780" y1="318" x2="800" y2="375"><stop stop-color="#080830" stop-opacity=".55"/><stop offset="1" stop-color="#080830" stop-opacity="0"/></linearGradient>
<linearGradient id="or" gradientUnits="userSpaceOnUse" x1="60" y1="80" x2="600" y2="500"><stop stop-color="#85551f"/><stop offset=".4" stop-color="#b9792c"/><stop offset="1" stop-color="#d08c18"/></linearGradient>
<linearGradient id="tip" x1="0" y1="0" x2="1" y2="0"><stop stop-color="#f8e51c"/><stop offset=".5" stop-color="#dcfb18"/></linearGradient>
<linearGradient id="td" gradientUnits="userSpaceOnUse" x1="750" y1="570" x2="758" y2="592"><stop stop-color="#dafa12"/><stop offset=".5" stop-color="#cde810"/><stop offset="1" stop-color="#a2b807"/></linearGradient>
${gd}${yd}
<clipPath id="yc"><path d="M160 58L165 75L205 90L185 115L165 160Q240 150 310 175L303 250Q380 252 443 287L438 375Q490 375 550 420L532 510Q590 515 650 545L600 590L768 580L772 562Q755 470 720 380T640 220T560 110T455 45Q430 32 405 30L320 28Q240 35 160 55Z"/></clipPath>
<clipPath id="bc"><path id="bp" d="M713 587L683 550L667 520L653 487Q648 465 650 433Q653 410 670 380Q685 362 697 355Q715 342 730 337L770 322L820 307L833 303L870 300L1030 460L961 489L927 465L893 446L867 427L827 407L800 395L787 392L767 388L747 387L723 388Q710 390 700 397L680 413L667 432L661 457V480L673 505L683 528L692 550L702 572L715 587Z"/></clipPath>
<clipPath id="gc"><path d="M713 587L702 572L692 550L683 528L673 505L669 482L671 455L677 437L690 415L715 394L747 387L787 390L814 402L812 423L805 447L803 480L804 566L732 601Z"/></clipPath></defs>
<rect x="389" y="159" width="811" height="579" fill="url(#bg)"/>
<g clip-path="url(#gc)"><rect x="640" y="380" width="180" height="230" fill="#4f4f4c"/>${gs}<path d="M713 587L804 545V567L732 602Z" fill="url(#td)"/></g>
<path d="M700 396L680 412L666 432L660 457V482L669 481L670 458L676 436L690 416L716 394Z" fill="#6c6b68"/>
<use href="#bp" fill="url(#bl)"/>
<g clip-path="url(#bc)"><g transform="translate(800 280) scale(.33333)">${ribS}</g>
<path d="M640 300H840L850 345Q740 360 655 440L640 420Z" fill="url(#sh)"/>
<path d="M649 457Q648 465 655 490Q668 530 713 587" fill="none" stroke="#06064c" stroke-width="7" opacity=".7"/>
<path d="M700 397Q720 387 747 387Q790 389 827 407T961 489" fill="none" stroke="#05053c" stroke-width="6" opacity=".65"/></g>
<path d="M663 487l7-2l4 18l-7 2ZM670 513l6-3l4 16l-7 1ZM681 538l6-1l3 10l-6 1Z" fill="#57564f"/>
<g transform="translate(800 280) scale(.33333)">
<path d="M50 88L95 95L75 115L50 148L75 155L92 185Q150 160 258 188L247 265Q330 255 397 300L382 390Q440 385 500 435L485 530Q545 535 600 562L660 545L580 420L440 200L320 30L160 60Z" fill="url(#or)"/>
<path d="M52 88L200 62M60 146Q130 110 205 90M75 155Q150 122 205 100M258 188L310 175M397 300L443 287M500 435L550 420" stroke="#5a3b12" stroke-width="5" fill="none" opacity=".7"/>
<g clip-path="url(#yc)">${ys}</g>
<path d="M160 62Q250 35 320 30L405 32L455 47" fill="none" stroke="#222c10" stroke-width="6" opacity=".7"/>
<path d="M484 628Q540 580 620 562Q700 545 772 562L557 668Z" fill="url(#tip)"/></g>
<path d="M661 408L696 390M631.500 424L697 389M634.500 428.500L655 416" stroke="#08081e"/><path d="M698 388l-10 9l-3-5Z" fill="#08081e"/>
<g transform="translate(620 450) scale(.33333)" fill="none" stroke="#0a0a0d" stroke-width="3">${L.map(d=>`<path d="M${d}"/>`).join('')}</g>
<g transform="translate(1040 155) scale(.33333)">
<g fill="#9694b2"><path d="M227 68L262 33L298 68ZM227 393H298L262 428ZM99 197V265L65 231ZM423 194V268L460 231Z"/>
<path d="M206 53L210 77Q170 90 148 115L152 124L114 138L120 90L128 98Q155 64 206 53ZM318 53L313 77Q353 92 374 118L369 124L408 138L404 92L396 99Q368 64 318 53Z"/></g>
<path d="M190 150Q250 130 315 118Q350 124 365 150L383 240Q384 270 370 284L270 336Q230 350 195 338L160 220Q155 165 190 150Z" fill="#b9c0cf"/>
<path d="M205 180Q200 172 215 170L290 152L310 130Q345 128 357 160L372 240Q372 262 350 268L235 312Z" fill="#e2e4ec"/>
<path d="M172 190L203 178L238 308L215 322Z" fill="#a3a8b8"/><path d="M160 192Q164 182 174 192L220 318Q210 335 196 325Z" fill="#dde3ec"/><path d="M205 160L300 126L315 118L290 148L215 170Z" fill="#9fa6b6"/>
<path d="M163 178Q175 152 203 151L198 176L170 190ZM235 320Q268 310 268 334Q240 346 215 334Z" fill="#eef4f5"/>
<path d="M270 312L350 280L372 272L365 292L272 332Z" fill="#98a0b0"/>
<path d="M175 192L215 170Q270 162 285 190L305 260Q305 290 285 300M290 155L312 130" fill="none" stroke="#868ba0" stroke-width="3"/>
<text transform="matrix(.93 -.28 .2 1 247 257)" font-family="DejaVu Sans,sans-serif" font-size="44" fill="#000" stroke="#000" stroke-width="2" textLength="104" lengthAdjust="spacingAndGlyphs">RIGHT</text>
<path d="M174 242l14 6l-11 4l15 6l-10 4l16 4l-14 3l14 7" fill="none" stroke="#151515" stroke-width="3"/>
<path d="M156 232L196 338" stroke="#0a0ac8" stroke-width="7"/><path d="M198 338L290 300" stroke="#38f038" stroke-width="5"/><path d="M197 340L220 360" stroke="#e00000" stroke-width="8"/>
<g font-family="DejaVu Sans,sans-serif" font-size="24"><text x="147" y="193" fill="#1414c8">Z</text><text x="243" y="371" fill="#b41c28">X</text><text x="331" y="283" fill="#7dcc62" font-size="18">Y</text></g>
<path d="M332 365L362 355L390 363V402L360 413L332 403Z" fill="#aaa8bd"/><path d="M332 365L362 355L390 363L361 374Z" fill="#c2c1d2"/><path d="M361 374L390 363V402L361 413Z" fill="#8481a0"/><path d="M404 377H438L421 393Z" fill="#32304c"/></g>
<g transform="translate(860 670) scale(.33333)"><path d="M935 117L915 65" stroke="#15158a" stroke-width="6"/><path d="M911 77L914 62L926 76Z" fill="#15158a"/><path d="M935 118L960 109" stroke="#b01414" stroke-width="7"/><path d="M942 117L958 102L962 112Z" fill="#8c1717"/><path d="M960 108L977 101" stroke="#2c982c" stroke-width="6"/>
<g font-family="DejaVu Sans,sans-serif" font-size="26" fill="#111"><text x="920" y="65">Z</text><text x="968" y="110" font-size="24">X</text><text x="989" y="101">Y</text></g></g>
</svg>`);
define('fc-logo','<style>:host{display:block;flex:none;width:20px;height:20px}</style><svg width="20" height="20" viewBox="0 0 20 20"><path d="M1 1h10v4H6v3h4v4H6v7H1Z" fill="#d01a2c" stroke="#6c0c16"/><circle cx="13.500" cy="13.500" r="4.500" fill="none" stroke="#2b4c7c" stroke-width="4.500" stroke-dasharray="2 1.530"/><circle cx="13.500" cy="13.500" r="3.800" fill="#f3f3f3" stroke="#5d8ac2" stroke-width="3"/></svg>');
define('doc-tab','<style>:host{display:flex;box-sizing:border-box;align-items:center;flex:none;border:1px solid #b0b0ae;border-top:0;border-radius:0 0 3px 3px;background:linear-gradient(#d6d6d4,#dfdfdd);padding:0 0 2px 14px;height:35px;white-space:pre}:host([active]){background:#f5f4f2;height:37px;padding-bottom:1px}span{margin:0 9px 0 4px}</style><fc-logo></fc-logo><span><slot></slot></span><svg width="12" height="12" viewBox="0 0 12 12"><path d="M1.500 1h1.500l7 10H8.500Z" fill="#111" stroke="#111" stroke-width="1.200"/><path d="M11 1L1 11" stroke="#111" stroke-width="1.400"/></svg>');
define('doc-tabs','<style>:host{display:flex;align-items:flex-start;height:40px;box-sizing:border-box;border-top:1px solid #aeaeac;margin-top:1px}</style><doc-tab style="width:156px">Startseite</doc-tab><doc-tab active style="width:198px">Unbenannt : 1*</doc-tab>');
define('status-bar','<style>:host{display:flex;align-items:center;height:32px;padding:1px 25px 0 1px;white-space:pre;flex:none;position:relative;box-sizing:border-box}.m{flex:1}i{position:absolute;right:1px;bottom:1px;width:11px;height:11px;background:radial-gradient(circle at 1px 1px,#bbb 0 .7px,transparent 1px) 0 0/3px 3px;clip-path:polygon(100% 0,100% 100%,0 100%)}drop-arrow{width:12px;margin-right:10px;transform:scale(.85)}</style><span class="m">Preselected: Unbenannt.Glider. (-1.46156, -1.74231e-07, 0.314573)</span><svg width="18" height="18"><rect x="1.500" y="1.500" width="15" height="14" rx="2" fill="none" stroke="#333" stroke-width="1.600"/><path d="M1.500 10.500h15M9 10.500v5" stroke="#333" stroke-width="1.500"/></svg><span style="margin-left:2px">Touchpad</span><drop-arrow></drop-arrow><span>10,09 mm x 7,20 mm</span><i></i>');
const B=(...n)=>n.map(i=>`<tool-button icon="${i}"></tool-button>`).join('');
const W=(t,w,x='')=>`<${t} style="width:${w}px" ${x}></${t}>`;
define('app-window',`<style>
:host{display:grid;grid-template-columns:1200px 4px;grid-template-rows:810px 3px;width:1204px;height:813px;overflow:hidden}
main{display:flex;flex-direction:column;background:#eeeeeb;border-top:1px solid #3c3335;box-sizing:border-box}
.side{background:linear-gradient(#3a3633 58px,#888583 58px)}.foot{grid-column:1/3;background:linear-gradient(90deg,#4b0528 35%,#701428 60%,#871a31)}
.w{display:flex;height:620px;flex:none}.c{display:flex;flex-direction:column;padding-top:1px}
</style><main><menu-bar></menu-bar>
<tool-bar>${W('tool-handle',13.5)}${B('new','open','save','print')}<tool-sep></tool-sep>${B('cut','copy','paste')}${W('tool-sep',7)}${B('undo')}${W('drop-arrow',15)}${B('redo')}${W('drop-arrow',14,'off')}${W('tool-sep',9)}${B('refresh')}${W('tool-sep',8)}${B('whats')}${W('tool-handle',19)}<combo-box>glider</combo-box>${W('tool-handle',19)}${B('record','stop','macro','play')}</tool-bar>
<tool-bar>${W('tool-handle',13.5)}${B('fit','fitsel','style')}<drop-arrow></drop-arrow>${B('bbox')}<tool-sep></tool-sep>${B('left','right','goto')}${W('drop-arrow',14)}${W('tool-sep',9)}<split-button></split-button>${B('iso')}<tool-sep></tool-sep>${B('cF','cT','cR')}<tool-sep></tool-sep>${B('cB','cD','cL')}<tool-sep></tool-sep>${B('ruler')}<tool-handle></tool-handle>${B('part','group','link','linkg')}${W('drop-arrow',14)}</tool-bar>
<tool-bar style="height:44px">${W('tool-handle',13.5)}${B(...Array.from({length:16},(_,i)=>'g'+(i+1)))}<tool-handle></tool-handle>${B('g17','g18','g19')}<tool-handle></tool-handle>${B('g20','g21','g22','g23','g24','g25','g26')}<svg width="24" height="20"><path d="M7 6l4 4l-4 4M13 6l4 4l-4 4" fill="none" stroke="#333" stroke-width="1.500"/></svg>${W('tool-handle',13)}${B('g27')}${W('tool-handle',17)}${B('g28')}</tool-bar>
<div class="w"><combo-view></combo-view><div class="c"><scene-view></scene-view><doc-tabs></doc-tabs></div></div>
<status-bar></status-bar></main><div class="side"></div><div class="foot"></div>`);
</script>
</body>
</html>
